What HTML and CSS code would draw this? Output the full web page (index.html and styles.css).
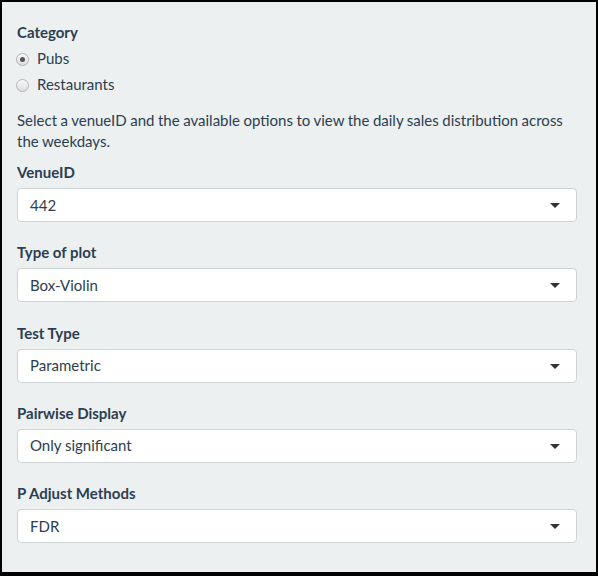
FILE: index.html
```html
<!DOCTYPE html>
<html>
<head>
<meta charset="utf-8">
<link rel="stylesheet" href="styles.css">
</head>
<body>
<div class="frame">
  <div class="well">
    <div class="group">
      <div class="label">Category</div>
      <label class="radio"><span class="dot checked"></span><span>Pubs</span></label>
      <label class="radio"><span class="dot"></span><span>Restaurants</span></label>
    </div>
    <p class="help">Select a venueID and the available options to view the daily sales distribution across the weekdays.</p>
    <div class="field">
      <div class="label">VenueID</div>
      <div class="select"><span>442</span><span class="caret"></span></div>
    </div>
    <div class="field">
      <div class="label">Type of plot</div>
      <div class="select"><span>Box-Violin</span><span class="caret"></span></div>
    </div>
    <div class="field">
      <div class="label">Test Type</div>
      <div class="select"><span>Parametric</span><span class="caret"></span></div>
    </div>
    <div class="field">
      <div class="label">Pairwise Display</div>
      <div class="select"><span>Only significant</span><span class="caret"></span></div>
    </div>
    <div class="field last">
      <div class="label">P Adjust Methods</div>
      <div class="select"><span>FDR</span><span class="caret"></span></div>
    </div>
  </div>
</div>
</body>
</html>
```
FILE: styles.css
```css
html, body {
  margin: 0;
  padding: 0;
  background: #000;
}
body {
  width: 598px;
  height: 576px;
  overflow: hidden;
  font-family: Lato, "Open Sans", sans-serif;
  font-size: 15px;
  line-height: 21px;
  color: #2c3e50;
}
.frame {
  box-sizing: border-box;
  width: 598px;
  height: 576px;
  padding: 2px 2px 4px 2px;
}
.well {
  box-sizing: border-box;
  height: 100%;
  background: #ecf0f1;
  padding: 20px 19px 0 15px;
  display: flex;
  flex-direction: column;
}
.label {
  font-weight: bold;
  margin-bottom: 5px;
}
.group {
  display: flex;
  flex-direction: column;
}
.radio {
  display: flex;
  align-items: center;
  height: 21px;
  margin-bottom: 5px;
}
.dot {
  box-sizing: border-box;
  width: 13px;
  height: 13px;
  border-radius: 50%;
  border: 1px solid #b4b4b4;
  background: linear-gradient(#f7f7f7, #dedede);
  margin: 0 8px 0 -1px;
  display: flex;
  align-items: center;
  justify-content: center;
  position: relative;
  top: 1px;
}
.dot.checked::after {
  content: "";
  width: 5px;
  height: 5px;
  border-radius: 50%;
  background: #555;
}
.help {
  margin: 10px 0 10px 0;
  word-spacing: -0.3px;
}
.field {
  margin-bottom: 20.25px;
}
.select {
  box-sizing: border-box;
  height: 34px;
  background: #fff;
  border: 1px solid #cfd4d6;
  border-radius: 4px;
  padding: 0 16px 0 12px;
  display: flex;
  align-items: center;
  justify-content: space-between;
}
.caret {
  width: 0;
  height: 0;
  border-style: solid;
  border-width: 5px 5px 0 5px;
  border-color: #333 transparent transparent transparent;
  margin-top: 1px;
}
```
